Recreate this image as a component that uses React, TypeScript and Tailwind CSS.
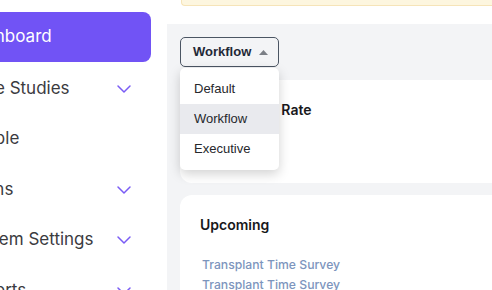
import React from 'react';
import { ChevronDown } from 'lucide-react';

const navItems = [
  { label: 'Dashboard', active: true, sub: false },
  { label: 'Case Studies', active: false, sub: true },
  { label: 'People', active: false, sub: false },
  { label: 'Scans', active: false, sub: true },
  { label: 'System Settings', active: false, sub: true },
  { label: 'Reports', active: false, sub: true },
];

const App: React.FC = () => {
  return (
    <div className="flex h-[290px] w-[492px] overflow-hidden bg-white font-['Inter',sans-serif]">
      {/* Sidebar */}
      <aside className="w-[167px] shrink-0 overflow-hidden bg-white pt-3">
        <nav className="-ml-[52px] flex w-[203px] flex-col gap-[0.5px]">
          {navItems.map((item) => (
            <div
              key={item.label}
              className={`flex h-[50px] items-center justify-between rounded-lg pl-4 pr-[15px] text-[17px] whitespace-nowrap ${
                item.active ? 'mb-[1px] bg-[#7153f5] text-white' : 'text-[#3b3b3f]'
              }`}
            >
              <span>{item.label}</span>
              {item.sub && <ChevronDown size={24} strokeWidth={1.5} className="text-[#7a5cf5]" />}
            </div>
          ))}
        </nav>
      </aside>

      {/* Main */}
      <main className="relative flex-1 overflow-hidden bg-[#f3f4f6]">
        <div className="h-6 bg-white">
          <div className="ml-[14px] h-[6px] rounded-bl border-b border-l border-[#f6e4b8] bg-[#fdf6df]" />
        </div>

        <div className="flex h-14 items-start pl-[13px] pt-[13px]">
          <button className="flex h-[30px] w-[99px] items-center gap-2 rounded-[5px] border border-[#4b5563] pl-3 font-['Liberation_Sans',Arial,sans-serif] text-[13px] font-bold text-[#1f2937]">
            Workflow
            <svg width="9" height="5" viewBox="0 0 9 5" className="text-[#7b7f86]">
              <path d="M4.5 0L9 5H0z" fill="currentColor" />
            </svg>
          </button>
        </div>

        <div className="ml-[13px] -mr-4 flex flex-col gap-3">
          <section className="h-[103px] rounded-xl bg-white px-5 pt-5">
            <h2 className="text-[14px] leading-5 font-semibold text-[#18181b]">Completion Rate</h2>
          </section>
          <section className="h-[120px] rounded-xl bg-white px-5 pt-5">
            <h2 className="text-[14px] leading-5 font-semibold text-[#18181b]">Upcoming</h2>
            <ul className="mt-5 pl-0.5 text-[12.2px] leading-5 font-medium text-[#7d95bd]">
              <li>Transplant Time Survey</li>
              <li>Transplant Time Survey</li>
            </ul>
          </section>
        </div>

        {/* Dropdown menu */}
        <div className="absolute left-[13px] top-[68px] w-[99px] rounded-[5px] bg-white py-1.5 font-['Liberation_Sans',Arial,sans-serif] text-[13px] text-[#26282c] shadow-[0_4px_12px_rgba(0,0,0,0.18)]">
          <div className="flex h-[30px] items-center px-[14px]">Default</div>
          <div className="flex h-[30px] items-center bg-[#e9eaee] px-[14px]">Workflow</div>
          <div className="flex h-[30px] items-center px-[14px]">Executive</div>
        </div>
      </main>
    </div>
  );
};

export default App;
